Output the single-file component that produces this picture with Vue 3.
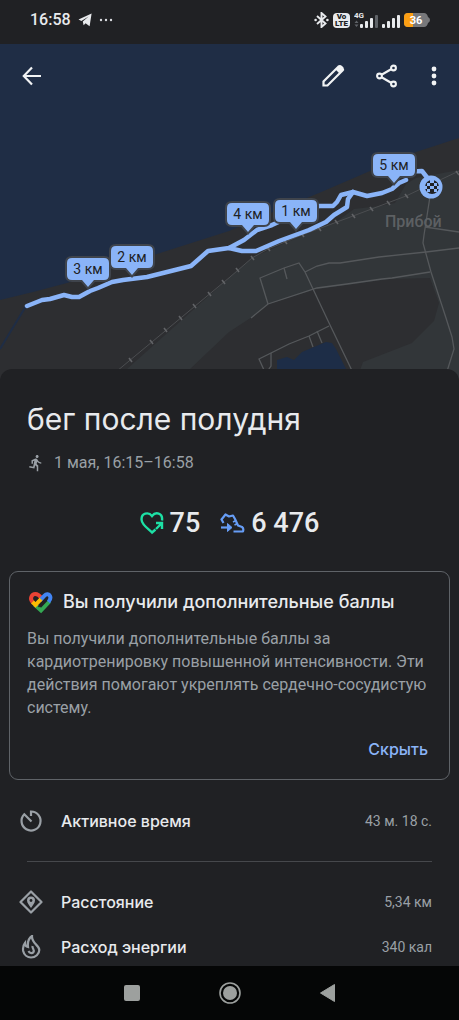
<template>
  <div class="screen">
    <div class="status-bar">
      <div class="status-left">
        <span class="clock">16:58</span>
        <svg width="14" height="14" viewBox="0 0 14 14">
          <path d="M0.5 6.4 L13.6 0.4 L11.6 13.2 L7.6 10.2 L5.6 12.2 L4.8 8.6 L10.6 3.4 L3.4 7.9 Z" fill="#e8eaed" />
        </svg>
        <svg width="14" height="4" viewBox="0 0 14 4" fill="#dadce0">
          <circle cx="2" cy="2" r="1.2" />
          <circle cx="7" cy="2" r="1.2" />
          <circle cx="12" cy="2" r="1.2" />
        </svg>
      </div>
      <div class="status-right">
        <svg width="15" height="16" viewBox="0 0 15 16">
          <path d="M3 4 L11.5 11.5 L7.5 15 V1 L11.5 4.5 L3 12" fill="none" stroke="#e8eaed" stroke-width="1.9" />
          <circle cx="1.6" cy="8" r="1.3" fill="#e8eaed" />
          <circle cx="13.4" cy="8" r="1.3" fill="#e8eaed" />
        </svg>
        <span class="volte"><span>Vo</span><span>LTE</span></span>
        <svg width="24" height="18" viewBox="0 0 24 18">
          <text x="0" y="7" class="net-label">4G</text>
          <path d="M0.5 12 L2.5 9.5 L4.5 12 Z M0.5 13.5 L2.5 16 L4.5 13.5 Z" fill="#5f6368" />
          <rect x="6" y="13" width="3" height="4" rx="1" fill="#e8eaed" />
          <rect x="11" y="10" width="3" height="7" rx="1" fill="#e8eaed" />
          <rect x="16" y="7" width="3" height="10" rx="1" fill="#e8eaed" />
          <rect x="21" y="4" width="3" height="13" rx="1" fill="#5f6368" />
        </svg>
        <svg width="18" height="18" viewBox="0 0 18 18" fill="#e8eaed">
          <rect x="0" y="13" width="3" height="4" rx="1" />
          <rect x="5" y="10" width="3" height="7" rx="1" />
          <rect x="10" y="7" width="3" height="10" rx="1" />
          <rect x="15" y="4" width="3" height="13" rx="1" />
        </svg>
        <svg width="26" height="14" viewBox="0 0 26 14">
          <path d="M4 0 H20 Q23 0 24 4 Q26 5 26 7 Q26 9 24 10 Q23 14 20 14 H4 Q0 14 0 10 V4 Q0 0 4 0 Z" fill="#77787b" />
          <path d="M4 0 H9 V14 H4 Q0 14 0 10 V4 Q0 0 4 0 Z" fill="#fb9f14" />
          <text x="12" y="11" text-anchor="middle" class="battery-label">36</text>
        </svg>
      </div>
    </div>

    <div class="map">
      <svg class="map-canvas" viewBox="0 44 459 337">
        <rect x="0" y="44" width="459" height="337" fill="#1f2d45" />
        <path class="land" d="M0 300 L33 292 L67 283 L110 269 L160 253 L229 231 L275 211 L319 193 L370 171 L416 152 L459 138 V381 H0 Z" />
        <path
          class="district"
          d="M114 381 L127 369 L230 277 L252 258 L285 243 L336 222 L354 209 L380 206 L395 203 L406 184 L416 178 L459 170 V381 Z"
        />
        <path
          class="land"
          d="M178 381 L190 369 L229 332 L252 317 L269 304 L312 290 L390 279 L430 278 L439 303 L434 321 L412 343 L363 362 L356 381 Z"
        />
        <path d="M277 381 V360 L287 357 L294 360 L302 352 L326 342 L332 343 L336 349 L352 381 Z" fill="#1d2d47" />
        <path d="M26 306 L0 349" stroke="#1f2d45" stroke-width="2" />

        <!-- Улицы -->
        <g class="road">
          <path d="M268 304 L260 278 L284 268 L299 263 L305 272 L330 325 L357 381" />
          <path d="M284 268 L287 279" />
          <path d="M251 318 L268 304 L317 288 L347 284 L382 279 L392 278 L430 272" />
          <path d="M305 272 L317 266 L329 263 L340 263 L379 257 L426 252 L459 248" />
          <path d="M431 190 L424 235 L423 243 L431 272 L446 318 L452 337 L454 349 L444 381" />
          <path d="M425 227 L459 232" />
          <path d="M329 326 L309 336 L289 344 L271 353 L259 359 L269 381" />
          <path d="M309 336 L313 347 M317 331 L322 343 M271 353 V366 L264 376" />
        </g>

        <!-- Железная дорога -->
        <path class="rail" d="M105 381 L230 277 L252 258 L268 249 L302 235 L353 216 L406 196 L459 171" />
        <g class="tie">
          <path v-for="(tie, i) in railTies" :key="i" :d="tie" />
        </g>

        <text x="385" y="227" class="place">Прибой</text>

        <!-- Маршрут -->
        <g class="route">
          <path
            d="M27 306 L42 300 L50 299 L64 295 L72 297 L79 297 L90 291 L98 288 L112 282 L123 280 L147 277 L191 266 L208 251 L229 248 L244 240 L257 230 L272 225 L300 212 L319 206 L333 206 L337 202 L341 195 L353 192 L367 196 L382 193 L392 189 L399 183 L406 180"
          />
          <path d="M229 248 L242 251 L256 251 L279 241 L309 230 L326 222 L334 215 L347 207 L348 199 L353 192" />
          <path d="M404 172 L422 171 L429 180" />
        </g>

        <g v-for="pin in pins" :key="pin.label">
          <path class="pin" :d="pinPath(pin.x, pin.y)" />
          <text :x="pin.x" :y="pin.y + 5" text-anchor="middle" class="pin-label">{{ pin.label }}</text>
        </g>

        <!-- Финиш -->
        <circle cx="431" cy="187" r="11.5" fill="#8ab4f8" />
        <circle cx="432" cy="187" r="7" fill="#202124" />
        <path
          d="M430 180 h4 v3 h-4 Z M427 183 h3 v3 h-3 Z M434 183 h3 v3 h-3 Z M430 186 h4 v3 h-4 Z M425 186 h2 v3 h-2 Z M437 186 h2 v3 h-2 Z M427 189 h3 v3 h-3 Z M434 189 h3 v3 h-3 Z"
          fill="#8ab4f8"
        />
      </svg>

      <div class="toolbar">
        <button type="button" aria-label="Назад">
          <svg width="24" height="24" viewBox="0 0 24 24">
            <path d="M21 12 H4 M12 3.5 L3.8 12 L12 20.5" fill="none" stroke="#f1f3f4" stroke-width="2.2" />
          </svg>
        </button>
        <div class="toolbar-actions">
          <button type="button" aria-label="Изменить">
            <svg width="26" height="26" viewBox="0 0 26 26">
              <path
                d="M3.5 22.5 V18.5 L18.5 3.5 Q20 2.5 21.5 4 L22.5 5 Q23.5 6.5 22.5 7.5 L7.5 22.5 Z"
                fill="none"
                stroke="#f1f3f4"
                stroke-width="2.2"
              />
              <path d="M15.5 6.5 L18.5 3.5 Q20 2.5 21.5 4 L22.5 5 Q23.5 6.5 22.5 7.5 L19.5 10.5 Z" fill="#f1f3f4" />
            </svg>
          </button>
          <button type="button" aria-label="Поделиться">
            <svg width="26" height="26" viewBox="0 0 26 26" fill="none" stroke="#f1f3f4" stroke-width="2.1">
              <path d="M8 11.5 L17.5 6 M8 14.5 L17.5 20" />
              <circle cx="5.5" cy="13" r="2.4" />
              <circle cx="19.5" cy="5" r="2.4" />
              <circle cx="19.5" cy="21" r="2.4" />
            </svg>
          </button>
          <button type="button" class="more" aria-label="Ещё">
            <svg width="8" height="24" viewBox="0 0 8 24" fill="#f1f3f4">
              <circle cx="4" cy="5" r="2.4" />
              <circle cx="4" cy="12" r="2.4" />
              <circle cx="4" cy="19" r="2.4" />
            </svg>
          </button>
        </div>
      </div>
    </div>

    <main class="sheet">
      <h1>бег после полудня</h1>
      <div class="meta">
        <svg width="18" height="18" viewBox="0 0 24 24" fill="#9aa0a6">
          <path
            d="M13.49 5.48c1.1 0 2-.9 2-2s-.9-2-2-2-2 .9-2 2 .9 2 2 2zm-3.6 13.9l1-4.4 2.1 2v6h2v-7.5l-2.1-2 .6-3c1.3 1.5 3.3 2.5 5.5 2.5v-2c-1.9 0-3.5-1-4.3-2.4l-1-1.6c-.4-.6-1-1-1.7-1-.3 0-.5.1-.8.1l-5.2 2.2v4.7h2v-3.4l1.8-.7-1.6 8.1-4.9-1-.4 2 7 1.4z"
          />
        </svg>
        <span>1 мая, 16:15–16:58</span>
      </div>

      <div class="stats">
        <div class="stat">
          <svg width="24" height="24" viewBox="0 0 24 24" fill="none" stroke="#1de0a5" stroke-width="2.4">
            <path d="M22 9.5 C23 1.5 15.5 0.5 12 5 C8.5 0.5 1 2 1.6 9 C2 14 8 17.5 12 21.5 L15.5 18.5" />
            <path d="M16 18 L21 13 M16 12 H22 V18" />
          </svg>
          <span>75</span>
        </div>
        <div class="stat">
          <svg width="25" height="24" viewBox="0 0 25 24" fill="none" stroke="#669df6" stroke-width="2.2" stroke-linejoin="round">
            <path d="M3.5 12 L1.5 8.5 L5.5 3.5 L9 5.5 L13 4.5 L15 8 L18 14.5 L22 16 Q24 17.5 23 20.5 H13.5" />
            <path d="M13 11 L16 9.5 M14.5 14 L17.5 12.5" stroke-width="1.6" />
            <path d="M1 16.5 H8" />
            <path d="M7.5 12.5 L12 16.5 L7.5 20.5 Z" fill="#669df6" stroke-width="1" />
          </svg>
          <span>6 476</span>
        </div>
      </div>

      <section class="card">
        <div class="card-head">
          <svg width="26" height="24" viewBox="0 0 26 24" fill="none" stroke-width="4">
            <path d="M7.5 14.5 L14 20.5 L22.5 11.5" stroke="#34a853" />
            <path d="M14.5 8 C12.5 5.5 11 4 8.5 4 C4.5 4 2.5 8.5 5.5 12 L6.5 13" stroke="#ea4335" />
            <path d="M13 10.5 L17.5 5.7 C19.5 3.5 22 4.2 23 6 C24 8.2 23 10.3 21.5 12" stroke="#4285f4" />
            <path d="M5.5 12 L8.5 15 L14 9.2" stroke="#fbbc04" />
            <path d="M11.5 17 L20 8" stroke="#202124" stroke-width="1.5" />
          </svg>
          <h2>Вы получили дополнительные баллы</h2>
        </div>
        <p>
          Вы получили дополнительные баллы за кардиотренировку повышенной интенсивности. Эти действия
          помогают укреплять сердечно-сосудистую систему.
        </p>
        <div class="card-actions">
          <button type="button">Скрыть</button>
        </div>
      </section>

      <div class="row">
        <svg width="24" height="24" viewBox="0 0 24 24" fill="none" stroke="#9aa0a6" stroke-width="2.2">
          <path d="M12 7 V2.5 A9.5 9.5 0 1 1 5.3 5.3 L12.5 12.5" />
        </svg>
        <span class="row-name">Активное время</span>
        <span class="row-value">43 м. 18 с.</span>
      </div>
      <hr />
      <div class="row-list">
        <div class="row">
          <svg width="24" height="24" viewBox="0 0 24 24">
            <path d="M12 1.5 L22.5 12 L12 22.5 L1.5 12 Z" fill="none" stroke="#9aa0a6" stroke-width="2.2" stroke-linejoin="round" />
            <path d="M12 6.5 A4 4 0 0 1 16 10.5 C16 13 13.5 15.5 12 18 C10.5 15.5 8 13 8 10.5 A4 4 0 0 1 12 6.5 Z" fill="#9aa0a6" />
            <circle cx="12" cy="10.5" r="1.4" fill="#202124" />
          </svg>
          <span class="row-name">Расстояние</span>
          <span class="row-value">5,34 км</span>
        </div>
        <div class="row">
          <svg width="24" height="24" viewBox="0 0 24 24" fill="none" stroke="#9aa0a6" stroke-width="2.2">
            <path d="M13 1 C8.5 4 8.5 8 9 12 C6.5 11.5 6 9.5 6 8 C4 10.5 3.6 12.5 4.2 16 C5 20 8.5 22.5 12 22.5 C16.5 22.5 20.3 19 20.3 15 C20.3 10 12.5 8.5 13 1 Z" />
            <path d="M13.5 11 C13 13.5 16 15 14.5 17 C13 19 10.5 18 9.5 16" />
          </svg>
          <span class="row-name">Расход энергии</span>
          <span class="row-value">340 кал</span>
        </div>
      </div>
    </main>

    <nav class="nav-bar">
      <button type="button" aria-label="Недавние">
        <svg width="24" height="24" viewBox="0 0 24 24">
          <rect x="4" y="4" width="16" height="16" rx="2" fill="#9da09e" />
        </svg>
      </button>
      <button type="button" aria-label="Домой">
        <svg width="24" height="24" viewBox="0 0 24 24">
          <circle cx="12" cy="12" r="10" fill="none" stroke="#9da09e" stroke-width="1.6" />
          <circle cx="12" cy="12" r="7" fill="#9da09e" />
        </svg>
      </button>
      <button type="button" aria-label="Назад">
        <svg width="24" height="24" viewBox="0 0 24 24">
          <path d="M18.5 3.5 V20.5 L4.5 12 Z" fill="#9da09e" stroke="#9da09e" stroke-linejoin="round" />
        </svg>
      </button>
    </nav>
  </div>
</template>

<script setup>
// Километровые отметки, x и y задают центр подписи
const pins = [
  { label: '3 км', x: 88, y: 269 },
  { label: '2 км', x: 132, y: 257 },
  { label: '4 км', x: 248, y: 214 },
  { label: '1 км', x: 296, y: 211 },
  { label: '5 км', x: 394, y: 165 }
];

const pinPath = (x, y) =>
  `M${x - 16} ${y - 11} h32 q5 0 5 5 v12 q0 5 -5 5 h-10 l-6 7 l-6 -7 h-10 q-5 0 -5 -5 v-12 q0 -5 5 -5 Z`;

const tiePoints = [
  [130, 360], [151, 342], [165, 330], [180, 318], [194, 306], [209, 294], [223, 282], [237, 270],
  [252, 258], [268, 249], [285, 242], [302, 235], [319, 229], [336, 222], [353, 216], [371, 209],
  [388, 203], [406, 196], [457, 173]
];

const railTies = tiePoints.map(([x, y]) => `M${x - 1} ${y - 2} l3 4`);
</script>

<style>
body {
  margin: 0;
  background: #202124;
}
</style>

<style scoped>
.screen {
  display: flex;
  flex-direction: column;
  min-height: 100vh;
  background: #202124;
  color: #e8eaed;
  font-family: Roboto, "Noto Sans", sans-serif;
}

svg {
  display: block;
  flex-shrink: 0;
}

button {
  padding: 0;
  border: none;
  background: none;
  font-family: inherit;
  cursor: pointer;
}

.status-bar {
  display: flex;
  justify-content: space-between;
  align-items: center;
  height: 44px;
  padding: 0 29px 4px 30px;
  box-sizing: border-box;
}

.status-left {
  display: flex;
  align-items: center;
  gap: 7px;
}

.clock {
  font-size: 16px;
  line-height: 20px;
  font-weight: 500;
}

.status-right {
  display: flex;
  align-items: center;
  gap: 4px;
}

.volte {
  display: flex;
  flex-direction: column;
  align-items: center;
  justify-content: center;
  width: 17px;
  height: 15px;
  border-radius: 4px;
  background: #e8eaed;
  color: #202124;
  font-size: 8px;
  line-height: 7px;
  font-weight: 900;
}

.net-label {
  font-size: 8px;
  font-weight: 700;
  fill: #e8eaed;
}

.battery-label {
  font-size: 11px;
  font-weight: 700;
  fill: #fff;
}

.map {
  position: relative;
}

.map-canvas {
  width: 100%;
  height: auto;
}

.land {
  fill: #2d2e31;
}

.district {
  fill: #323639;
}

.road path {
  fill: none;
  stroke: #55585b;
  stroke-width: 1.3;
}

.rail {
  fill: none;
  stroke: #4b4d50;
  stroke-width: 1;
}

.tie path {
  stroke: #626467;
  stroke-width: 1.5;
}

.place {
  font-size: 16px;
  font-weight: 500;
  fill: #5d6063;
}

.route path {
  fill: none;
  stroke: #8ab4f8;
  stroke-width: 4.5;
  stroke-linecap: round;
  stroke-linejoin: round;
}

.pin {
  fill: #8ab4f8;
  stroke: #3f444c;
  stroke-width: 4;
  paint-order: stroke;
}

.pin-label {
  font-size: 14px;
  fill: #202124;
}

.toolbar {
  position: absolute;
  top: 0;
  left: 0;
  right: 0;
  display: flex;
  justify-content: space-between;
  align-items: center;
  height: 64px;
  padding: 0 19px 0 20px;
}

.toolbar-actions {
  display: flex;
  align-items: center;
  gap: 28px;
}

.more {
  padding: 0 2px;
}

.sheet {
  position: relative;
  flex: 1;
  margin-top: -12px;
  padding-top: 31px;
  border-radius: 12px 12px 0 0;
  background: #202124;
}

h1 {
  margin: 0 27px;
  font-family: Inter, Roboto, sans-serif;
  font-size: 30px;
  line-height: 38px;
  font-weight: 400;
}

.meta {
  display: flex;
  align-items: center;
  gap: 9px;
  margin: 13px 27px 0;
  font-size: 16px;
  line-height: 24px;
  color: #9aa0a6;
}

.stats {
  display: flex;
  justify-content: center;
  gap: 20px;
  margin-top: 32px;
}

.stat {
  display: flex;
  align-items: center;
  gap: 6px;
  font-size: 27px;
  line-height: 32px;
  font-weight: 500;
}

.card {
  margin: 32px 9px 0;
  padding: 18px 17px 12px;
  border: 1px solid #5f6368;
  border-radius: 9px;
}

.card-head {
  display: flex;
  align-items: center;
  gap: 10px;
}

h2 {
  margin: 0;
  font-family: Inter, Roboto, sans-serif;
  font-size: 18px;
  line-height: 24px;
  font-weight: 500;
}

.card p {
  margin: 13px 0 0;
  font-size: 16px;
  line-height: 23px;
  color: #9aa0a6;
}

.card-actions {
  display: flex;
  justify-content: flex-end;
  margin-top: 12px;
}

.card-actions button {
  height: 36px;
  padding: 0 4px;
  font-family: Inter, Roboto, sans-serif;
  font-size: 16px;
  font-weight: 500;
  color: #8ab4f8;
}

.row {
  display: flex;
  align-items: center;
  height: 34px;
  padding: 0 27px 0 19px;
}

.card + .row {
  margin-top: 24px;
}

.row-name {
  flex: 1;
  margin-left: 18px;
  font-family: Inter, Roboto, sans-serif;
  font-size: 16px;
  line-height: 24px;
  font-weight: 500;
}

.row-value {
  font-size: 14px;
  line-height: 24px;
  color: #9aa0a6;
}

hr {
  height: 1px;
  margin: 23px 27px;
  border: none;
  background: #46484c;
}

.row-list {
  display: flex;
  flex-direction: column;
  gap: 11px;
}

.nav-bar {
  display: flex;
  justify-content: center;
  align-items: center;
  gap: 74px;
  height: 54px;
  background: #050606;
}
</style>
